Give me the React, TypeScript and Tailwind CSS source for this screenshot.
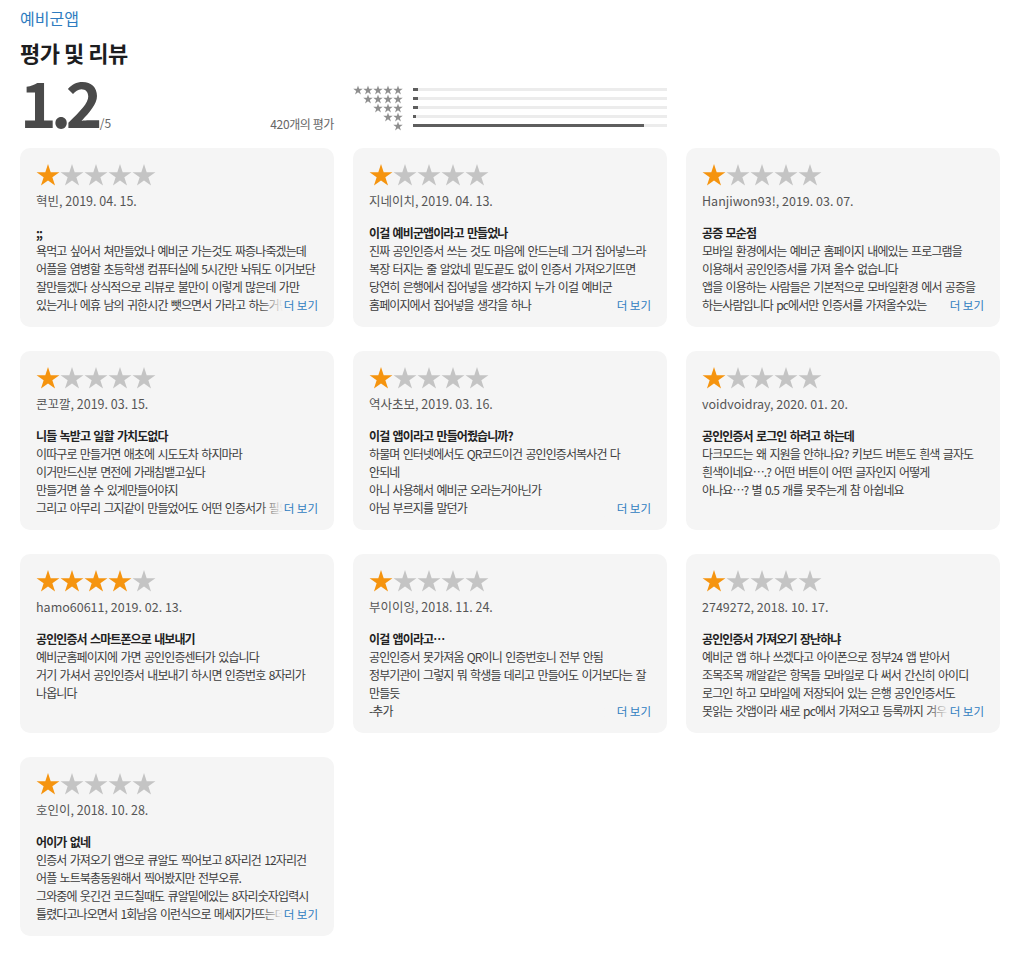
import React from "react";

interface Review {
  rating: number;
  author: string;
  date: string;
  title: string;
  lines: string[];
  more: boolean;
}

const reviews: Review[] = [
  {
    rating: 1,
    author: "혁빈",
    date: "2019. 04. 15.",
    title: ";;",
    lines: [
      "욕먹고 싶어서 쳐만들었나 예비군 가는것도 짜증나죽겠는데",
      "어플을 염병할 초등학생 컴퓨터실에 5시간만 놔둬도 이거보단",
      "잘만들겠다 상식적으로 리뷰로 불만이 이렇게 많은데 가만",
      "있는거나 에휴 남의 귀한시간 뺏으면서 가라고 하는거면 그냥",
    ],
    more: true,
  },
  {
    rating: 1,
    author: "지네이치",
    date: "2019. 04. 13.",
    title: "이걸 예비군앱이라고 만들었나",
    lines: [
      "진짜 공인인증서 쓰는 것도 마음에 안드는데 그거 집어넣느라",
      "복장 터지는 줄 알았네 밑도끝도 없이 인증서 가져오기뜨면",
      "당연히 은행에서 집어넣을 생각하지 누가 이걸 예비군",
      "홈페이지에서 집어넣을 생각을 하나",
    ],
    more: true,
  },
  {
    rating: 1,
    author: "Hanjiwon93!",
    date: "2019. 03. 07.",
    title: "공증 모순점",
    lines: [
      "모바일 환경에서는 예비군 홈페이지 내에있는 프로그램을",
      "이용해서 공인인증서를 가져 올수 없습니다",
      "앱을 이용하는 사람들은 기본적으로 모바일환경 에서 공증을",
      "하는사람입니다 pc에서만 인증서를 가져올수있는",
    ],
    more: true,
  },
  {
    rating: 1,
    author: "콘꼬깔",
    date: "2019. 03. 15.",
    title: "니들 녹받고 일할 가치도없다",
    lines: [
      "이따구로 만들거면 애초에 시도도차 하지마라",
      "이거만드신분 면전에 가래침뱉고싶다",
      "만들거면 쓸 수 있게만들어야지",
      "그리고 아무리 그지같이 만들었어도 어떤 인증서가 필요한지",
    ],
    more: true,
  },
  {
    rating: 1,
    author: "역사초보",
    date: "2019. 03. 16.",
    title: "이걸 앱이라고 만들어줬습니까?",
    lines: [
      "하물며 인터넷에서도 QR코드이건 공인인증서복사건 다",
      "안되네",
      "아니 사용해서 예비군 오라는거아닌가",
      "아님 부르지를 말던가",
    ],
    more: true,
  },
  {
    rating: 1,
    author: "voidvoidray",
    date: "2020. 01. 20.",
    title: "공인인증서 로그인 하려고 하는데",
    lines: [
      "다크모드는 왜 지원을 안하나요? 키보드 버튼도 흰색 글자도",
      "흰색이네요….? 어떤 버튼이 어떤 글자인지 어떻게",
      "아나요…? 별 0.5 개를 못주는게 참 아쉽네요",
    ],
    more: false,
  },
  {
    rating: 4,
    author: "hamo60611",
    date: "2019. 02. 13.",
    title: "공인인증서 스마트폰으로 내보내기",
    lines: [
      "예비군홈페이지에 가면 공인인증센터가 있습니다",
      "거기 가셔서 공인인증서 내보내기 하시면 인증번호 8자리가",
      "나옵니다",
    ],
    more: false,
  },
  {
    rating: 1,
    author: "부이이잉",
    date: "2018. 11. 24.",
    title: "이걸 앱이라고…",
    lines: [
      "공인인증서 못가져옴 QR이니 인증번호니 전부 안됨",
      "정부기관이 그렇지 뭐 학생들 데리고 만들어도 이거보다는 잘",
      "만들듯",
      "-추가",
    ],
    more: true,
  },
  {
    rating: 1,
    author: "2749272",
    date: "2018. 10. 17.",
    title: "공인인증서 가져오기 장난하냐",
    lines: [
      "예비군 앱 하나 쓰겠다고 아이폰으로 정부24 앱 받아서",
      "조목조목 깨알같은 항목들 모바일로 다 써서 간신히 아이디",
      "로그인 하고 모바일에 저장되어 있는 은행 공인인증서도",
      "못읽는 갓앱이라 새로 pc에서 가져오고 등록까지 겨우 했더니",
    ],
    more: true,
  },
  {
    rating: 1,
    author: "호인이",
    date: "2018. 10. 28.",
    title: "어이가 없네",
    lines: [
      "인증서 가져오기 앱으로 큐알도 찍어보고 8자리건 12자리건",
      "어플 노트북총동원해서 찍어봤지만 전부오류.",
      "그와중에 웃긴건 코드칠때도 큐알밑에있는 8자리숫자입력시",
      "틀렸다고나오면서 1회남음 이런식으로 메세지가뜨는데 진짜",
    ],
    more: true,
  },
];

// bars in the histogram, 5 stars down to 1
const distribution = [2, 2, 2, 1, 91];

const Star = ({className}: {className: string}) => (
  <svg viewBox="0 0 24 24" className={className} fill="currentColor">
    <polygon points="12,0.9 14.69,9.19 23.41,9.19 16.36,14.32 19.05,22.61 12,17.48 4.95,22.61 7.64,14.32 0.59,9.19 9.31,9.19" />
  </svg>
);

const ReviewCard = ({review}: {review: Review}) => {
  const last = review.lines.length - 1;
  return (
    <div className="h-[179px] rounded-[10px] bg-[#f5f5f5] px-[16px] pt-[15px]">
      <div className="flex h-[24px]">
        {[1, 2, 3, 4, 5].map((i) => (
          <Star
            key={i}
            className={`h-[24px] w-[24px] ${
              i <= review.rating ? "text-[#f5940f]" : "text-[#c4c4c4]"
            }`}
          />
        ))}
      </div>
      <div className="mt-[5px] text-[12.5px] leading-[18px] text-[#555555]">
        {review.author}, {review.date}
      </div>
      <div className="mt-[14px] text-[12px] font-bold leading-[18px] tracking-[-0.9px] [word-spacing:1.5px] text-[#222222]">
        {review.title}
      </div>
      <div className="text-[12px] leading-[18px] tracking-[-0.9px] [word-spacing:1.5px] text-[#3c3c3c]">
        {review.lines.map((line, i) =>
          i === last && review.more ? (
            <div key={i} className="flex h-[18px]">
              <div className="relative min-w-0 flex-1 overflow-hidden whitespace-nowrap">
                {line}
                <span className="absolute right-0 top-0 h-[18px] w-[22px] bg-linear-to-r from-[#f5f5f5]/0 to-[#f5f5f5]" />
              </div>
              <span className="shrink-0 pl-[1px] text-[11.5px] tracking-normal [word-spacing:0px] text-[#2f7cc0]">
                더 보기
              </span>
            </div>
          ) : (
            <div key={i} className="overflow-hidden whitespace-nowrap">
              {line}
            </div>
          )
        )}
      </div>
    </div>
  );
};

export default function App() {
  return (
    <div className="min-h-[959px] w-[1009px] bg-white pl-[20px] pt-[8px] font-['Noto_Sans_CJK_KR',sans-serif]">
      <div className="text-[16px] leading-[20px] text-[#2f7cc0]">예비군앱</div>
      <h1 className="mt-[12px] text-[22px] font-bold leading-[24px] tracking-[-0.5px] text-[#1d1d1f]">
        평가 및 리뷰
      </h1>

      <div className="mt-[12px] grid w-[980px] grid-cols-3 gap-x-[19px]">
        <div className="flex items-end justify-between">
          <div className="flex items-baseline">
            <span className="text-[62px] font-bold leading-[50px] tracking-[-5.5px] text-[#4a4a4a]">
              1.2
            </span>
            <span className="ml-[3px] text-[12px] text-[#666666]">/5</span>
          </div>
          <span className="text-[12px] leading-[16px] tracking-[-0.4px] text-[#666666]">
            420개의 평가
          </span>
        </div>
        <div className="mt-[9px] flex flex-col">
          {distribution.map((pct, idx) => {
            const count = 5 - idx;
            return (
              <div key={count} className="flex h-[9px] items-center">
                <div className="flex w-[50px] justify-end">
                  {Array.from({length: count}).map((_, s) => (
                    <Star key={s} className="h-[10px] w-[10px] text-[#8e8e8e]" />
                  ))}
                </div>
                <div className="ml-[10px] h-[3px] flex-1 bg-[#ececec]">
                  <div className="h-full bg-[#5e5e5e]" style={{width: `${pct}%`}} />
                </div>
              </div>
            );
          })}
        </div>
        <div />
      </div>

      <div className="mt-[16px] grid w-[980px] grid-cols-3 gap-x-[19px] gap-y-[24px]">
        {reviews.map((review, i) => (
          <ReviewCard key={i} review={review} />
        ))}
      </div>
    </div>
  );
}
